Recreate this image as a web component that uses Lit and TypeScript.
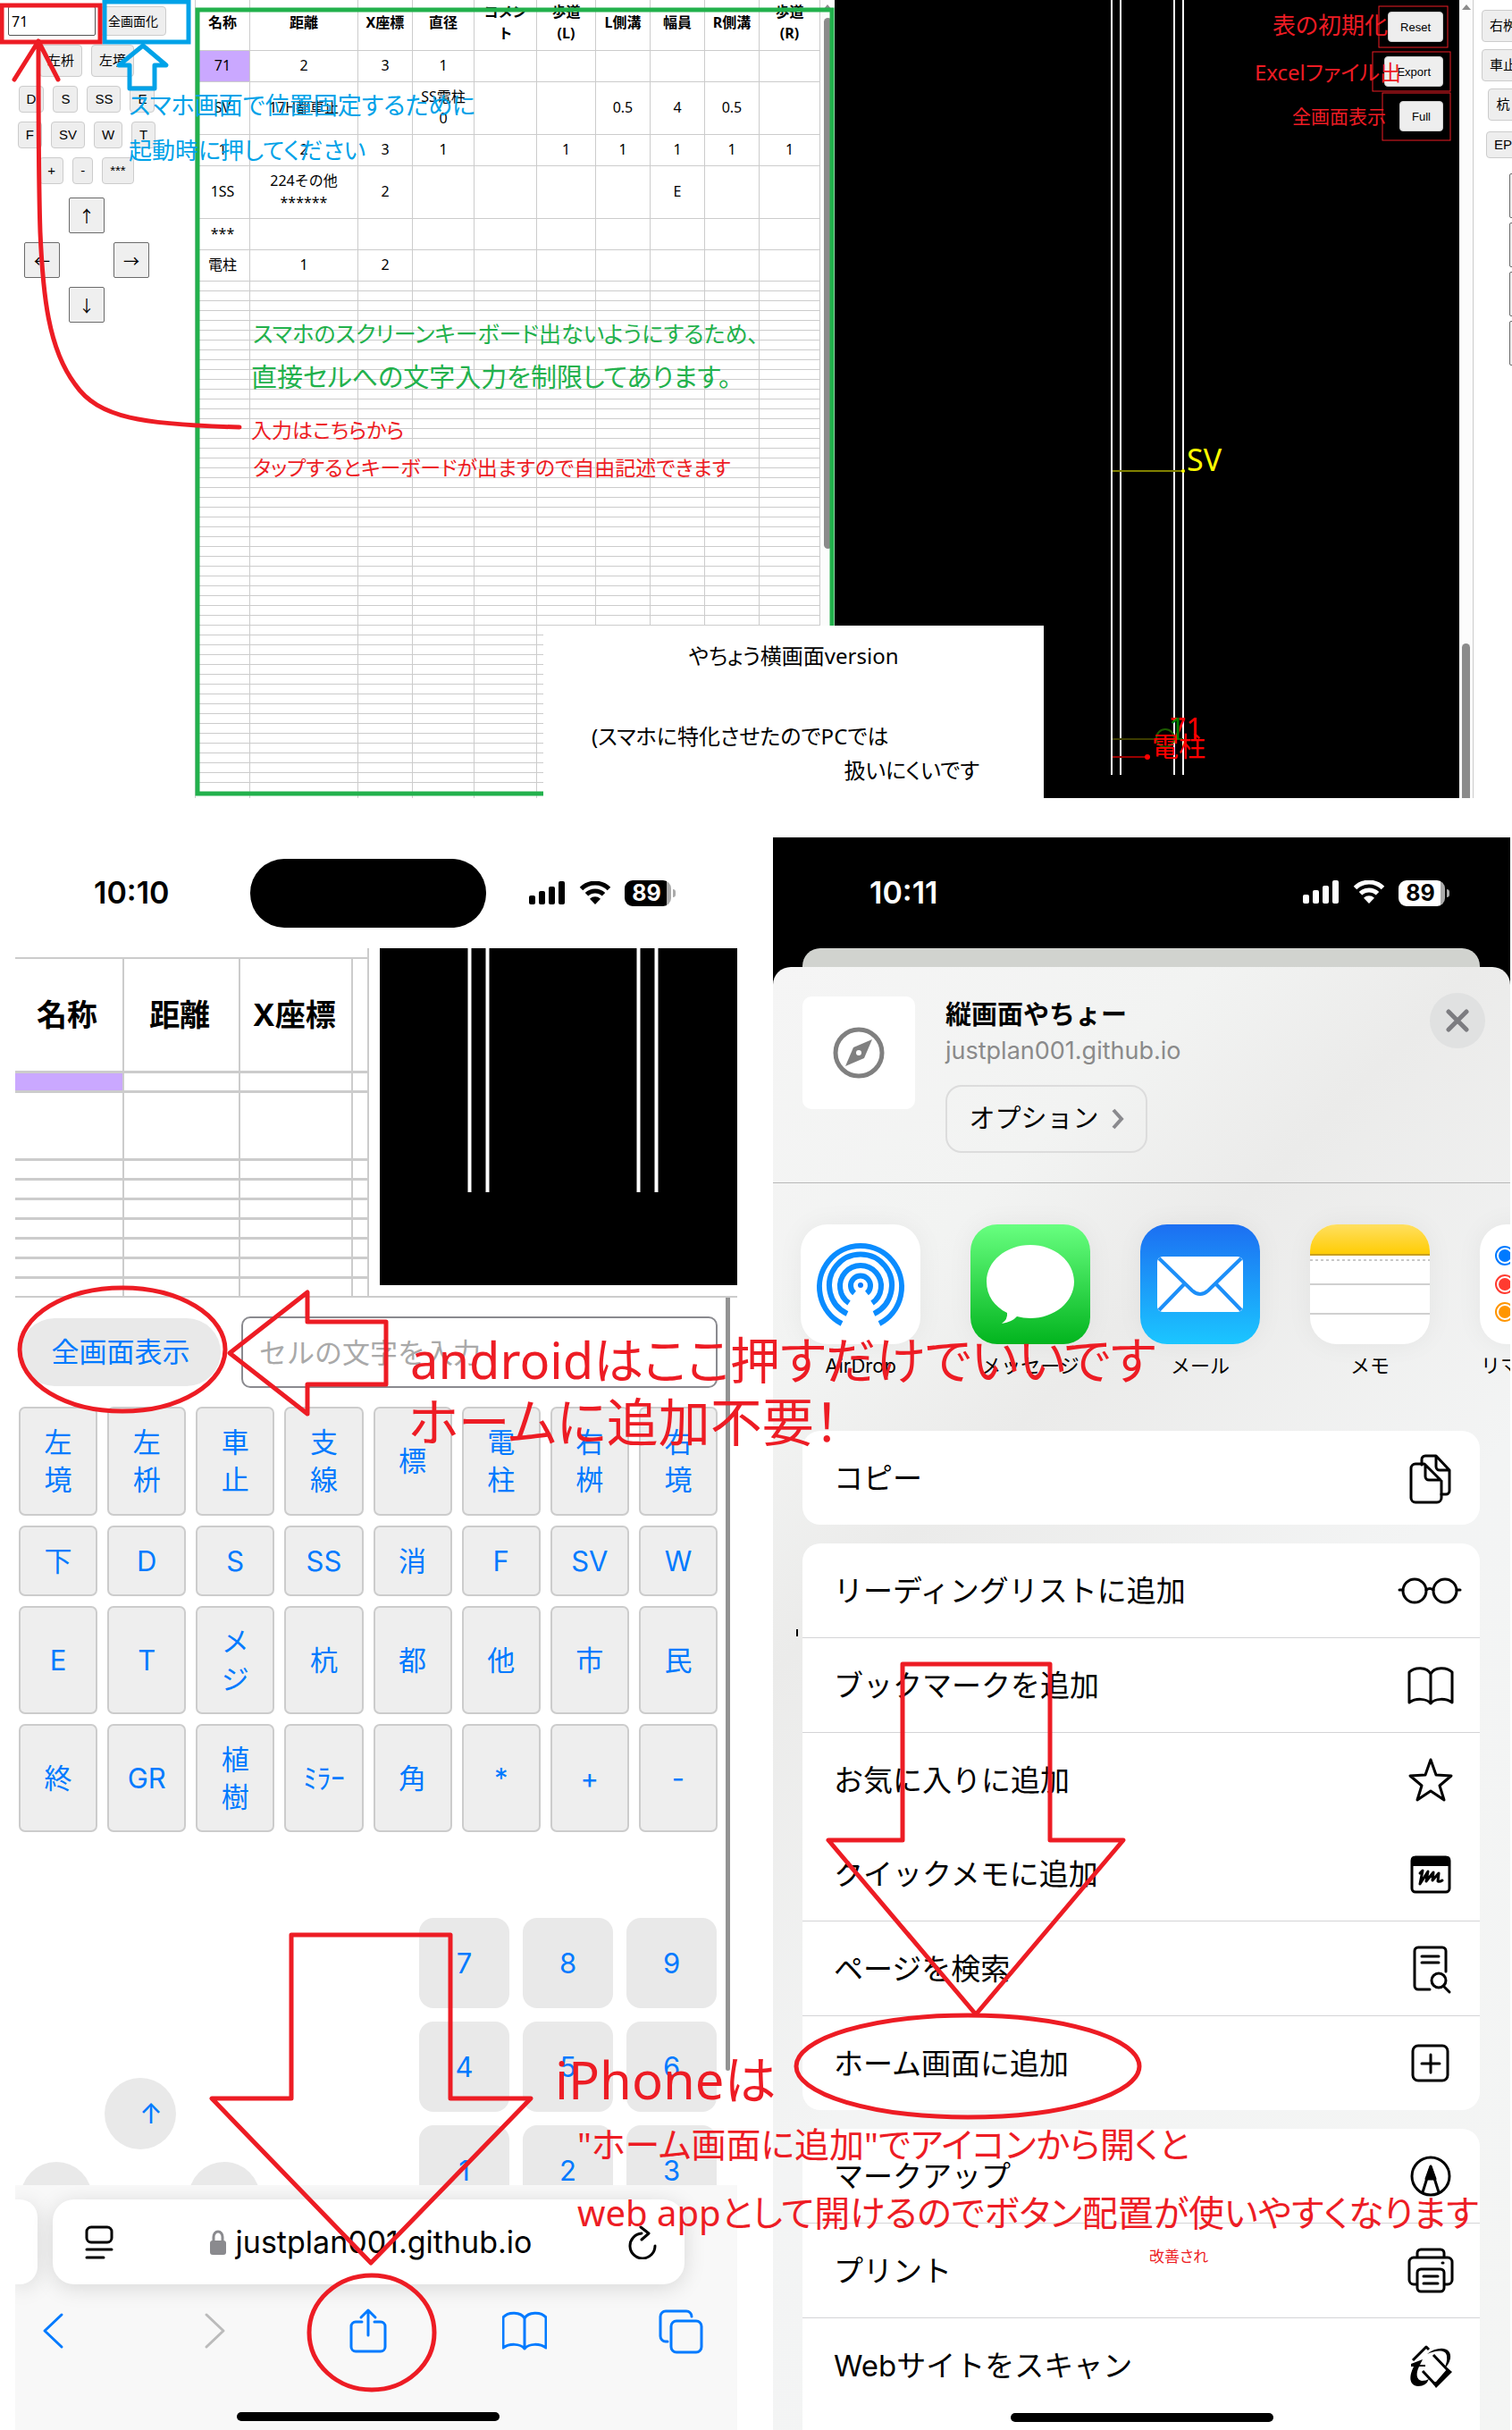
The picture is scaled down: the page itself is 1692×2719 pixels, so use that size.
import { LitElement, html, svg, css, nothing } from "lit";
import { customElement } from "lit/decorators.js";

const SHEET_COLUMNS: [string, number][] = [
  ["名称", 62],
  ["距離", 121],
  ["X座標", 61],
  ["直径", 69],
  ["コメント", 70],
  ["歩道\n(L)", 66],
  ["L側溝", 61],
  ["幅員", 61],
  ["R側溝", 61],
  ["歩道\n(R)", 68],
];

const SHEET_ROWS: { tall: boolean; cells: string[] }[] = [
  { tall: false, cells: ["71", "2", "3", "1", "", "", "", "", "", ""] },
  { tall: true, cells: ["SV", "17H都車止", "", "SS電柱\n0", "", "", "0.5", "4", "0.5", ""] },
  { tall: false, cells: ["1", "2", "3", "1", "", "1", "1", "1", "1", "1"] },
  { tall: true, cells: ["1SS", "224その他\n******", "2", "", "", "", "", "E", "", ""] },
  { tall: false, cells: ["***", "", "", "", "", "", "", "", "", ""] },
  { tall: false, cells: ["電柱", "1", "2", "", "", "", "", "", "", ""] },
];

const EMPTY_ROWS = 53;

const PHONE_KEYS = [
  "左\n境", "左\n枡", "車\n止", "支\n線", "標", "電\n柱", "右\n桝", "右\n境",
  "下", "D", "S", "SS", "消", "F", "SV", "W",
  "E", "T", "メ\nジ", "杭", "都", "他", "市", "民",
  "終", "GR", "植\n樹", "ﾐﾗｰ", "角", "*", "+", "-",
];

/* Status bar glyphs shared by both phones */
const statusIcons = () => html`
  <svg class="signal" viewBox="0 0 40 26" aria-hidden="true">
    <rect x="0" y="16" width="7" height="10" rx="2"></rect>
    <rect x="11" y="11" width="7" height="15" rx="2"></rect>
    <rect x="22" y="6" width="7" height="20" rx="2"></rect>
    <rect x="33" y="0" width="7" height="26" rx="2"></rect>
  </svg>
  <svg class="wifi" viewBox="0 0 36 26" aria-hidden="true">
    <g class="wifi-arcs">
      <path d="M2.5 8.5a22 22 0 0 1 31 0"></path>
      <path d="M8.5 14.8a13.5 13.5 0 0 1 19 0"></path>
    </g>
    <path d="M18 26l-6-6.3a8.6 8.6 0 0 1 12 0z"></path>
  </svg>
  <span class="battery"><span class="level">89</span></span>
`;

@customElement("survey-sheet")
class SurveySheet extends LitElement {
  static styles = css`
    :host {
      display: flex;
      min-width: 0;
      overflow: hidden;
      height: 893px;
    }
    .sheet {
      flex: 1;
      min-width: 0;
      height: max-content;
      table-layout: fixed;
      border-collapse: separate;
      border-spacing: 0;
      font: 16px/24px "Noto Sans", "Noto Sans CJK JP", sans-serif;
      color: #000;
    }
    .cell {
      box-sizing: border-box;
      height: 35px;
      padding: 0 6px 3px;
      border-right: 1px solid #ccc;
      border-bottom: 1px solid #ccc;
      text-align: center;
      vertical-align: middle;
      white-space: pre-line;
      line-height: 24px;
    }
    .cell:first-child {
      border-left: 1px solid #ccc;
      padding-left: 0;
      padding-right: 0;
    }
    .head .cell {
      height: 57px;
      font-weight: 700;
      padding-bottom: 6px;
    }
    .tall .cell {
      height: 59px;
    }
    .thin .cell {
      height: 11px;
      padding: 0;
      font-size: 0;
      line-height: 0;
    }
    .selected {
      background: #caa8ff;
    }
    .track {
      flex: 0 0 16px;
      background: #fcfcfc;
      display: flex;
      flex-direction: column;
      align-items: center;
      padding-top: 5px;
      box-sizing: border-box;
    }
    .up {
      border: 5px solid transparent;
      border-top: 0;
      border-bottom: 6px solid #8b8b8b;
    }
    .thumb {
      width: 9px;
      height: 594px;
      margin-top: 9px;
      border-radius: 5px;
      background: #8b8b8b;
    }
  `;

  render() {
    const total = SHEET_COLUMNS.reduce((sum, [, w]) => sum + w, 0);
    return html`
      <table class="sheet">
        <colgroup>
          ${SHEET_COLUMNS.map(([, w]) => html`<col style="width:${(w / total) * 100}%" />`)}
        </colgroup>
        <thead>
          <tr class="head">
            ${SHEET_COLUMNS.map(([name]) => html`<th class="cell" scope="col">${name}</th>`)}
          </tr>
        </thead>
        <tbody>
          ${SHEET_ROWS.map(
            (row, r) => html`<tr class=${row.tall ? "tall" : "short"}>
              ${row.cells.map(
                (text, c) => html`<td class="cell ${r === 0 && c === 0 ? "selected" : ""}">${text}</td>`
              )}
            </tr>`
          )}
          ${Array.from(
            { length: EMPTY_ROWS },
            () => html`<tr class="thin">
              ${SHEET_COLUMNS.map(() => html`<td class="cell"></td>`)}
            </tr>`
          )}
        </tbody>
      </table>
      <div class="track"><span class="up"></span><span class="thumb"></span></div>
    `;
  }
}

@customElement("landscape-app")
class LandscapeApp extends LitElement {
  static styles = css`
    :host {
      display: grid;
      grid-template-columns: 218px minmax(0, 716fr) minmax(0, 699fr) 16px 43px;
      height: 893px;
      overflow: hidden;
      position: relative;
      font: 15px/28px "Liberation Sans", "Noto Sans CJK JP", sans-serif;
    }
    .pad {
      padding: 7px 24px 0 9px;
      display: flex;
      flex-direction: column;
      gap: 10px;
    }
    .row {
      display: flex;
      justify-content: center;
      gap: 10px;
      padding-right: 9px;
    }
    .entry {
      gap: 5px;
      justify-content: flex-start;
      padding: 0;
    }
    .field {
      box-sizing: border-box;
      width: 98px;
      height: 33px;
      padding: 0 3px;
      border: 1px solid #555;
      border-radius: 2px;
      font: 16px "Noto Sans", sans-serif;
    }
    .key {
      box-sizing: border-box;
      flex: none;
      height: 30px;
      padding: 0 8px;
      border: 1px solid #ccc;
      border-radius: 4px;
      background: #eee;
      color: #000;
      font: inherit;
      line-height: 26px;
      white-space: nowrap;
    }
    .wide {
      height: 36px;
      line-height: 32px;
    }
    .full {
      height: 33px;
      font-size: 14px;
      line-height: 30px;
    }
    .arrows {
      display: grid;
      grid-template-columns: repeat(3, 40px);
      grid-auto-rows: 40px;
      gap: 10px;
      margin: 5px 0 0 18px;
    }
    .arrow {
      box-sizing: border-box;
      padding: 0;
      border: 1px solid #6b6b6b;
      border-radius: 2px;
      background: #efefef;
      color: #000;
      font: 18px "Noto Sans CJK JP", sans-serif;
    }
    .n {
      grid-area: 1 / 2;
    }
    .w {
      grid-area: 2 / 1;
    }
    .e {
      grid-area: 2 / 3;
    }
    .s {
      grid-area: 3 / 2;
    }
    .canvas {
      background: #000;
      display: grid;
    }
    .drawing,
    .actions {
      grid-area: 1 / 1;
    }
    .drawing {
      width: 100%;
      height: 893px;
      font: 32px "Noto Sans", "Noto Sans CJK JP", sans-serif;
    }
    .actions {
      display: flex;
      flex-direction: column;
      align-items: flex-end;
      gap: 16px;
      padding: 13px 18px 0 0;
    }
    .action {
      height: 34px;
      padding: 0 13px;
      border: 1px solid #ccc;
      border-radius: 4px;
      background: #eee;
      font: 13px "Liberation Sans", sans-serif;
      color: #000;
    }
    .track {
      background: #fcfcfc;
      border-right: 1px solid #ccc;
      box-sizing: border-box;
      display: flex;
      flex-direction: column;
      align-items: center;
      justify-content: space-between;
      padding-top: 5px;
    }
    .up {
      border: 5px solid transparent;
      border-top: 0;
      border-bottom: 6px solid #8b8b8b;
    }
    .thumb {
      width: 9px;
      height: 173px;
      border-radius: 5px 5px 0 0;
      background: #8b8b8b;
    }
    .side {
      overflow: hidden;
    }
    .side-keys {
      width: 66px;
      display: flex;
      flex-direction: column;
      align-items: center;
      gap: 8px;
      padding-top: 11px;
    }
    .side-arrows {
      display: grid;
      grid-template-columns: 40px;
      grid-auto-rows: 50px;
      gap: 5px;
      margin: 17px 0 0 40px;
    }
    .ep {
      margin-top: 4px;
    }
    .notice {
      position: absolute;
      left: 608px;
      bottom: 0;
      box-sizing: border-box;
      width: 560px;
      height: 193px;
      padding: 16px 54px 0;
      background: #fff;
      font: 24px/36px "Noto Sans", "Noto Sans CJK JP", sans-serif;
      font-feature-settings: "palt";
    }
    .line {
      margin: 0;
      white-space: nowrap;
    }
    .title {
      text-align: center;
    }
    .note {
      margin-top: 54px;
    }
    .end {
      margin-top: 2px;
      padding-right: 18px;
      text-align: right;
    }
  `;

  private keys(labels: string[], extra = "") {
    return html`<div class="row">
      ${labels.map((label) => html`<button class="key ${extra}">${label}</button>`)}
    </div>`;
  }

  render() {
    return html`
      <div class="pad">
        <div class="row entry">
          <input class="field" aria-label="セルの文字" .value=${"71"} />
          <button class="key full">全画面化</button>
        </div>
        ${this.keys(["左枡", "左境"], "wide")} ${this.keys(["D", "S", "SS", "E"])}
        ${this.keys(["F", "SV", "W", "T"])} ${this.keys(["+", "-", "***"])}
        <div class="arrows">
          <button class="arrow n">↑</button>
          <button class="arrow w">←</button>
          <button class="arrow e">→</button>
          <button class="arrow s">↓</button>
        </div>
      </div>
      <survey-sheet></survey-sheet>
      <div class="canvas">
        <svg class="drawing" viewBox="0 0 699 893" preserveAspectRatio="xMidYMin slice">
          <g stroke="#fff" stroke-width="2">
            <path d="M310 0V867M320 0V867M380 0V867M390 0V867"></path>
          </g>
          <path d="M311 527H390" stroke="#808000" stroke-width="2"></path>
          <circle cx="390" cy="527" r="2" fill="#ff0"></circle>
          <text x="394" y="527" fill="#ff0" font-size="34">SV</text>
          <path d="M311 827H360" stroke="#3c3c00" stroke-width="2"></path>
          <circle cx="370" cy="826" r="10" fill="none" stroke="#1c5a00" stroke-width="2"></circle>
          <path d="M370 827H390" stroke="#0a6a00" stroke-width="2"></path>
          <text x="375" y="827" fill="#f00">71</text>
          <text x="374" y="827" fill="#008000">1</text>
          <path d="M311 847H350" stroke="#900" stroke-width="2"></path>
          <circle cx="350" cy="847" r="3" fill="#f00"></circle>
          <text x="355" y="846" fill="#f00" font-size="30">電柱</text>
        </svg>
        <div class="actions">
          <button class="action">Reset</button>
          <button class="action">Export</button>
          <button class="action">Full</button>
        </div>
      </div>
      <div class="track"><span class="up"></span><span class="thumb"></span></div>
      <div class="side">
        <div class="side-keys">
          <button class="key wide">右桝</button>
          <button class="key wide">車止</button>
          <button class="key wide">杭</button>
          <button class="key ep">EP</button>
        </div>
        <div class="side-arrows">
          <button class="arrow">↑</button>
          <button class="arrow">←</button>
          <button class="arrow">→</button>
          <button class="arrow">↓</button>
        </div>
      </div>
      <div class="notice">
        <p class="line title">やちょう横画面version</p>
        <p class="line note">(スマホに特化させたのでPCでは</p>
        <p class="line end">扱いにくいです</p>
      </div>
    `;
  }
}

const phoneStyles = css`
  .status {
    display: flex;
    align-items: center;
    height: 124px;
    box-sizing: border-box;
    font: 600 34px/40px Inter, sans-serif;
  }
  .signal {
    width: 40px;
    height: 26px;
    fill: currentColor;
  }
  .wifi {
    width: 36px;
    height: 26px;
    margin-left: 16px;
    fill: currentColor;
  }
  .wifi-arcs {
    fill: none;
    stroke: currentColor;
    stroke-width: 5;
  }
  .battery {
    display: flex;
    align-items: center;
    margin-left: 15px;
  }
  .battery::after {
    content: "";
    width: 3px;
    height: 9px;
    margin-left: 2px;
    border-radius: 0 3px 3px 0;
    background: #aaa;
  }
  .level {
    box-sizing: border-box;
    width: 52px;
    height: 29px;
    border-radius: 9px;
    padding-right: 3px;
    background: linear-gradient(90deg, currentColor 47px, #aaa 47px);
    font: 700 25px/29px Inter, sans-serif;
    text-align: center;
  }
  .level::first-line {
    color: var(--level-text);
  }
  .home {
    width: 294px;
    height: 10px;
    border-radius: 5px;
    background: #000;
  }
`;

@customElement("input-phone")
class InputPhone extends LitElement {
  static styles = [
    phoneStyles,
    css`
      :host {
        display: flex;
        flex-direction: column;
        min-width: 0;
        overflow: hidden;
        background: #fff;
        color: #000;
        font: 31px/42px Inter, "Noto Sans CJK JP", sans-serif;
        --level-text: #fff;
      }
      .status {
        padding: 0 69px 0 88px;
      }
      .time {
        width: 175px;
      }
      .island {
        width: 264px;
        height: 77px;
        border-radius: 38px;
        background: #000;
        margin-right: auto;
      }
      .split {
        display: flex;
        gap: 12px;
        height: 389px;
        border-bottom: 2px solid #ccc;
      }
      .grid {
        flex: 395;
        min-width: 0;
        width: 0;
        height: 389px;
        table-layout: fixed;
        border-collapse: separate;
        border-spacing: 0;
        border-right: 2px solid #ccc;
      }
      .c1 {
        width: 31%;
      }
      .c2 {
        width: 33%;
      }
      .c3 {
        width: 32%;
      }
      .cell {
        box-sizing: border-box;
        padding: 0;
        height: 22px;
        font-size: 0;
        line-height: 0;
        border-right: 2px solid #ccc;
        border-bottom: 3px solid #ccc;
      }
      .cell:last-child {
        border-right: 0;
      }
      .top .cell {
        height: 12px;
        border-right: 0;
        border-bottom-width: 2px;
      }
      .head .cell {
        height: 128px;
        padding-right: 4px;
        font: 700 34px/48px Inter, "Noto Sans CJK JP", sans-serif;
        white-space: nowrap;
      }
      .tall .cell {
        height: 75px;
      }
      .last .cell {
        height: 19px;
        border-bottom: 0;
      }
      .selected {
        background: #caa8ff;
      }
      .view {
        flex: 401;
        min-width: 0;
        height: 377px;
        background: #000;
      }
      .body {
        position: relative;
        display: flex;
        flex-direction: column;
        flex: none;
        height: 993px;
        overflow: hidden;
      }
      .indicator {
        position: absolute;
        top: 0;
        right: 8px;
        width: 5px;
        height: 865px;
        border-radius: 0 0 3px 3px;
        background: #939393;
      }
      .entry {
        display: flex;
        gap: 23px;
        padding: 21px 22px 0 6px;
      }
      .show {
        width: 224px;
        height: 76px;
        border: 0;
        margin-top: 2px;
        border-radius: 38px;
        background: #e9e9e9;
        color: #007aff;
        font: inherit;
      }
      .field {
        flex: 1;
        min-width: 0;
        box-sizing: border-box;
        height: 80px;
        padding: 0 18px;
        border: 2px solid #8a8a8f;
        border-radius: 10px;
        font: inherit;
      }
      .field::placeholder {
        color: #a9a9a9;
      }
      .keys {
        display: grid;
        grid-template-columns: repeat(8, minmax(0, 1fr));
        grid-template-rows: 122px 79px 121px 121px;
        gap: 11px;
        padding: 21px 22px 0 4px;
      }
      .key {
        padding: 0;
        border: 2px solid #ccc;
        border-radius: 7px;
        background: #eee;
        color: #007aff;
        font: inherit;
        white-space: pre-line;
      }
      .bottom {
        display: flex;
        justify-content: space-between;
        align-items: flex-start;
        padding: 96px 23px 0 6px;
      }
      .dpad {
        display: grid;
        grid-template-columns: repeat(3, 80px);
        grid-auto-rows: 80px;
        gap: 14px;
        padding-top: 179px;
      }
      .round {
        border: 0;
        padding: 0 0 0 24px;
        border-radius: 40px;
        background: #e9e9e9;
        color: #007aff;
        font: inherit;
      }
      .n {
        grid-area: 1 / 2;
      }
      .w {
        grid-area: 2 / 1;
      }
      .e {
        grid-area: 2 / 3;
      }
      .numbers {
        display: grid;
        grid-template-columns: repeat(3, 101px);
        grid-auto-rows: 101px;
        gap: 15px;
      }
      .number {
        border: 0;
        padding: 0;
        border-radius: 16px;
        background: #e9e9e9;
        color: #007aff;
        font: inherit;
      }
      .browser {
        flex: none;
        height: 275px;
        background: #f8f8f8;
        overflow: hidden;
        display: flex;
        flex-direction: column;
        align-items: center;
      }
      .bar {
        align-self: stretch;
        display: flex;
        gap: 17px;
        padding: 16px 59px 0 0;
      }
      .peek {
        width: 25px;
        border-radius: 0 20px 20px 0;
        background: #fff;
        box-shadow: 0 4px 24px #0002;
      }
      .address {
        flex: 1;
        display: flex;
        align-items: center;
        height: 95px;
        padding: 0 31px 0 36px;
        box-sizing: border-box;
        border-radius: 24px;
        background: #fff;
        box-shadow: 0 4px 24px #0002;
        font-size: 34px;
      }
      .icon {
        fill: none;
        stroke: #000;
        stroke-width: 3;
        stroke-linecap: round;
        stroke-linejoin: round;
        display: block;
      }
      .pageicon {
        width: 32px;
        height: 38px;
      }
      .lock {
        width: 18px;
        height: 28px;
        margin: 0 11px 0 auto;
      }
      .reload {
        width: 32px;
        height: 38px;
        margin-left: auto;
      }
      .tools {
        align-self: stretch;
        display: flex;
        justify-content: space-between;
        padding: 25px 38px 0 18px;
      }
      .tool {
        border: 0;
        padding: 0;
        background: none;
      }
      .tool .icon {
        width: 50px;
        height: 54px;
        stroke: #007aff;
      }
      .tool .dim {
        stroke: #bbb;
      }
      .home {
        margin: 64px 18px 0 0;
      }
    `,
  ];

  private cells(count = 4, selected = false) {
    return Array.from(
      { length: count },
      (_, i) => html`<td class="cell ${selected && i === 0 ? "selected" : ""}"></td>`
    );
  }

  render() {
    return html`
      <div class="status">
        <span class="time">10:10</span>
        <span class="island"></span>
        ${statusIcons()}
      </div>
      <div class="split">
        <table class="grid">
          <colgroup>
            <col class="c1" /><col class="c2" /><col class="c3" /><col />
          </colgroup>
          <tbody>
            <tr class="top">${this.cells()}</tr>
            <tr class="head">
              <th class="cell" scope="col">名称</th>
              <th class="cell" scope="col">距離</th>
              <th class="cell" scope="col">X座標</th>
              <td class="cell"></td>
            </tr>
            <tr>${this.cells(4, true)}</tr>
            <tr class="tall">${this.cells()}</tr>
            ${Array.from({ length: 6 }, () => html`<tr>${this.cells()}</tr>`)}
            <tr class="last">${this.cells()}</tr>
          </tbody>
        </table>
        <svg class="view" viewBox="0 0 401 377" preserveAspectRatio="xMidYMin slice">
          <path d="M101 0V273M121 0V273M290 0V273M310 0V273" stroke="#fff" stroke-width="4"></path>
        </svg>
      </div>
      <div class="body">
        <span class="indicator"></span>
        <div class="entry">
          <button class="show">全画面表示</button>
          <input class="field" aria-label="セルの文字" placeholder="セルの文字を入力" />
        </div>
        <div class="keys">
          ${PHONE_KEYS.map((label) => html`<button class="key">${label}</button>`)}
        </div>
        <div class="bottom">
          <div class="dpad">
            <button class="round n">↑</button>
            <button class="round w" aria-label="左"></button>
            <button class="round e" aria-label="右"></button>
          </div>
          <div class="numbers">
            ${[7, 8, 9, 4, 5, 6, 1, 2, 3].map((n) => html`<button class="number">${n}</button>`)}
          </div>
        </div>
      </div>
      <div class="browser">
        <div class="bar">
          <span class="peek"></span>
          <div class="address">
            <svg class="icon pageicon" viewBox="0 0 32 38">
              <rect x="2" y="2" width="28" height="17" rx="5"></rect>
              <path d="M2 27H30M2 36H21"></path>
            </svg>
            <svg class="lock" viewBox="0 0 18 28">
              <path d="M4 13V8a5 6 0 0 1 10 0v5" fill="none" stroke="#8a8a8e" stroke-width="3"></path>
              <rect x="0" y="12" width="18" height="16" rx="3" fill="#8a8a8e"></rect>
            </svg>
            <span>justplan001.github.io</span>
            <svg class="icon reload" viewBox="0 0 32 38">
              <path d="M15 9A14 14 0 1 0 30 23M14 2l9 7-8 7"></path>
            </svg>
          </div>
        </div>
        <div class="tools">
          <button class="tool" aria-label="戻る">
            <svg class="icon" viewBox="0 0 50 54"><path d="M34 9L15 27L34 45"></path></svg>
          </button>
          <button class="tool" aria-label="進む">
            <svg class="icon dim" viewBox="0 0 50 54"><path d="M20 9L39 27L20 45"></path></svg>
          </button>
          <button class="tool" aria-label="共有">
            <svg class="icon" viewBox="0 0 50 54">
              <path d="M19 17H12a5 5 0 0 0-5 5V45a5 5 0 0 0 5 5H40a5 5 0 0 0 5-5V22a5 5 0 0 0-5-5H33M26 32V4M18 12l8-8 8 8"></path>
            </svg>
          </button>
          <button class="tool" aria-label="ブックマーク">
            <svg class="icon" viewBox="0 0 50 54">
              <path d="M25 13C21 6 7 5 1 12V46C8 41 20 41 25 47C30 41 42 41 49 46V12C43 5 29 6 25 13V47"></path>
            </svg>
          </button>
          <button class="tool" aria-label="タブ">
            <svg class="icon" viewBox="0 0 50 54">
              <rect x="14" y="16" width="34" height="35" rx="6"></rect>
              <path d="M10 39H8a6 6 0 0 1-6-6V11a6 6 0 0 1 6-6H31a6 6 0 0 1 6 6"></path>
            </svg>
          </button>
        </div>
        <span class="home"></span>
      </div>
    `;
  }
}

const ICONS: Record<string, unknown> = {
  copy: svg`<path d="M15 13V7a4 4 0 0 1 4-4H31L46 19V42a4 4 0 0 1-4 4H37M31 3V15a4 4 0 0 0 4 4H46"></path>
    <path d="M7 13H17L36 32V51a5 5 0 0 1-5 5H7a5 5 0 0 1-5-5V18a5 5 0 0 1 5-5zM18 14V27a4 4 0 0 0 4 4H35" transform="translate(1 -1)"></path>`,
  glasses: svg`<circle cx="7" cy="28" r="13"></circle><circle cx="41" cy="28" r="13"></circle>
    <path d="M20 27q4-3 8 0M-6 27h-4M54 27h4"></path>`,
  book: svg`<path d="M25 15C21 7 7 7 1 13V47C8 42 20 42 25 48C30 42 42 42 49 47V13C43 7 29 7 25 15V48"></path>`,
  star: svg`<path d="M25 5L31 22L48 23L35 34L40 50L25 40L10 50L15 34L2 23L19 22z"></path>`,
  memo: svg`<rect x="4" y="9" width="42" height="39" rx="4"></rect>
    <path d="M4 18V12a3 3 0 0 1 3-3H43a3 3 0 0 1 3 3V18z" fill="#000" stroke-width="2"></path>
    <path d="M13 27l3-3-3 15 9-14-2 11 8-10-1 9 7-8-1 9q2 1 5-1"></path>`,
  find: svg`<path d="M24 51H11a4 4 0 0 1-4-4V8a4 4 0 0 1 4-4H38a4 4 0 0 1 4 4V31M15 14H34M15 21H34"></path>
    <circle cx="34" cy="41" r="8"></circle><path d="M39 47L46 54"></path>`,
  plus: svg`<rect x="5" y="8" width="39" height="39" rx="6"></rect><path d="M25 18V38M15 28H35"></path>`,
  markup: svg`<circle cx="25" cy="28" r="21"></circle><path d="M16 46L21 30L25 18L29 30L34 46"></path>
    <path d="M20 31L25 17L30 31z" fill="#000"></path>`,
  print: svg`<path d="M10 12V8a4 4 0 0 1 4-4H36a4 4 0 0 1 4 4v4M9 43H6a5 5 0 0 1-5-5V18a5 5 0 0 1 5-5H44a5 5 0 0 1 5 5V38a5 5 0 0 1-5 5H41"></path>
    <rect x="10" y="26" width="30" height="25" rx="4"></rect><path d="M17 34H33M17 42H33M38 19h1"></path>`,
  scan: svg`<path d="M5 22L20 7L23 10M28 16L46 35M16 34L30 49" stroke-linecap="butt"></path>
    <g fill="#000" stroke="none">
      <path d="M21 15C32 6 49 6 47 20Q45 28 40 31Q44 24 43 17C42 10 32 10 21 15z"></path>
      <path d="M44 31L49 35L31 53L26 46L31 46z"></path>
      <path d="M3 26L16 21L13 27H19V29H12C8 37 9 44 15 45Q20 45 23 43Q20 51 11 51C0 50 1 39 6 29H3z"></path>
    </g>`,
};

const ACTION_GROUPS: { label: string; icon: string; rule: boolean }[][] = [
  [{ label: "コピー", icon: "copy", rule: false }],
  [
    { label: "リーディングリストに追加", icon: "glasses", rule: true },
    { label: "ブックマークを追加", icon: "book", rule: true },
    { label: "お気に入りに追加", icon: "star", rule: false },
    { label: "クイックメモに追加", icon: "memo", rule: true },
    { label: "ページを検索", icon: "find", rule: true },
    { label: "ホーム画面に追加", icon: "plus", rule: false },
  ],
  [
    { label: "マークアップ", icon: "markup", rule: true },
    { label: "プリント", icon: "print", rule: true },
    { label: "Webサイトをスキャン", icon: "scan", rule: false },
  ],
];

const APPS: { label: string; tone: string; art: unknown }[] = [
  {
    label: "AirDrop",
    tone: "white",
    art: svg`<g fill="none" stroke="#0a8cff" stroke-width="6">
        <path d="M46 111A46 46 0 1 1 88 111"></path>
        <path d="M52 99A35 35 0 1 1 82 99" transform="translate(0 1)"></path>
        <path d="M54 88A23 23 0 1 1 80 88"></path>
        <path d="M60 77A11 11 0 1 1 74 77"></path>
      </g><circle cx="67" cy="68" r="3" fill="#0a7aff"></circle>`,
  },
  {
    label: "メッセージ",
    tone: "green",
    art: svg`<path d="M67 23C40 23 18 41 18 64C18 80 27 92 41 99Q42 106 35 111Q47 109 52 103Q59 105 67 105C94 105 116 87 116 64S94 23 67 23z" fill="#fff"></path>`,
  },
  {
    label: "メール",
    tone: "blue",
    art: svg`<rect x="19" y="36" width="96" height="62" rx="6" fill="#fff"></rect>
      <path d="M21 38L58 74Q67 82 76 74L113 38M21 96L49 67M113 96L85 67" fill="none" stroke="#1d8ff8" stroke-width="4"></path>`,
  },
  {
    label: "メモ",
    tone: "white",
    art: svg`<rect width="134" height="34" fill="url(#gold)"></rect>
      <path d="M0 34H134" stroke="#c8a020" stroke-width="2"></path>
      <path d="M0 40H134" stroke="#c8c8c8" stroke-width="2" stroke-dasharray="3 3"></path>
      <path d="M0 67H134M0 100H134" stroke="#d0d0d0" stroke-width="2"></path>`,
  },
  {
    label: "リマインダー",
    tone: "white",
    art: svg`<g stroke-width="2">
        <circle cx="28" cy="35" r="7" fill="#007aff"></circle><circle cx="28" cy="35" r="10" fill="none" stroke="#007aff"></circle>
        <circle cx="28" cy="67" r="7" fill="#ff3b30"></circle><circle cx="28" cy="67" r="10" fill="none" stroke="#ff3b30"></circle>
        <circle cx="28" cy="98" r="7" fill="#ff9500"></circle><circle cx="28" cy="98" r="10" fill="none" stroke="#ff9500"></circle>
      </g>`,
  },
];

@customElement("share-phone")
class SharePhone extends LitElement {
  static styles = [
    phoneStyles,
    css`
      :host {
        display: flex;
        flex-direction: column;
        position: relative;
        min-width: 0;
        overflow: hidden;
        background: #000;
        font: 33px/48px Inter, "Noto Sans CJK JP", sans-serif;
        color: #000;
        --level-text: #000;
      }
      .status {
        justify-content: space-between;
        padding: 0 68px 0 108px;
        color: #fff;
      }
      .icons {
        display: flex;
      }
      .behind {
        height: 21px;
        margin: 0 34px 0 33px;
        border-radius: 20px 20px 0 0;
        background: #d1d3cf;
      }
      .sheet {
        flex: 1;
        border-radius: 20px 20px 0 0;
        background: linear-gradient(135deg, #f5f5f5, #f2f3f2 20%, #ebebea 32%, #f3f4f4 55%, #f4f5f4);
      }
      .head {
        display: flex;
        height: 242px;
        box-sizing: border-box;
        padding: 29px 28px 0 33px;
        border-bottom: 1px solid #b8b8b8;
      }
      .thumb {
        display: grid;
        place-items: center;
        width: 126px;
        height: 126px;
        margin-top: 4px;
        border-radius: 10px;
        background: #fff;
      }
      .compass {
        width: 60px;
        height: 60px;
      }
      .about {
        flex: 1;
        padding-left: 34px;
      }
      .name {
        margin: 3px 0 0;
        font-size: 29px;
        font-weight: 600;
        line-height: 44px;
      }
      .url {
        margin: 0;
        color: #8a8a8a;
        font-size: 27px;
        line-height: 36px;
      }
      .option {
        display: flex;
        align-items: center;
        justify-content: center;
        gap: 14px;
        box-sizing: border-box;
        width: 226px;
        height: 76px;
        margin-top: 20px;
        padding: 0;
        border: 2px solid #dcdcdc;
        border-radius: 18px;
        background: none;
        font: inherit;
        font-size: 29px;
        color: #000;
      }
      .chevron {
        width: 14px;
        height: 24px;
        fill: none;
        stroke: #8a8a8e;
        stroke-width: 4;
      }
      .close {
        display: grid;
        place-items: center;
        width: 62px;
        height: 62px;
        padding: 0;
        border: 0;
        border-radius: 31px;
        background: #e0e1e1;
      }
      .cross {
        width: 26px;
        height: 26px;
        stroke: #7c7c80;
        stroke-width: 5;
        stroke-linecap: round;
      }
      .apps {
        display: flex;
        gap: 56px;
        box-sizing: border-box;
        height: 277px;
        padding: 46px 0 0 31px;
        overflow: hidden;
      }
      .app {
        flex: none;
        display: flex;
        flex-direction: column;
        align-items: center;
        gap: 8px;
        width: 134px;
        padding: 0;
        border: 0;
        background: none;
        color: #000;
        font: inherit;
        font-size: 22px;
        line-height: 32px;
        white-space: nowrap;
      }
      .tile {
        width: 134px;
        height: 134px;
        border-radius: 30px;
        box-shadow: 0 0 30px #0000000d;
      }
      .white {
        background: #fff;
      }
      .green {
        background: linear-gradient(#68ff80, #02b41e);
      }
      .blue {
        background: linear-gradient(#1c6ff2, #1bc6ff);
      }
      .group {
        margin: 0 34px 21px 33px;
        border-radius: 20px;
        background: #fff;
      }
      .group:last-child {
        margin-bottom: 0;
        border-radius: 20px 20px 0 0;
        height: 337px;
      }
      .action {
        display: flex;
        align-items: center;
        justify-content: space-between;
        box-sizing: border-box;
        width: 100%;
        height: 105px;
        padding: 0 30px 0 35px;
        border: 0;
        background: none;
        color: #000;
        font: inherit;
        text-align: left;
      }
      .rule {
        height: 106px;
        border-bottom: 1px solid #d4d4d6;
      }
      .icon {
        width: 50px;
        height: 56px;
        overflow: visible;
        fill: none;
        stroke: #000;
        stroke-width: 3;
        stroke-linecap: round;
        stroke-linejoin: round;
      }
      .home {
        position: absolute;
        left: 50%;
        bottom: 10px;
        margin-left: -147px;
      }
    `,
  ];

  render() {
    return html`
      <div class="status">
        <span>10:11</span>
        <span class="icons">${statusIcons()}</span>
      </div>
      <div class="behind"></div>
      <div class="sheet">
        <div class="head">
          <div class="thumb">
            <svg class="compass" viewBox="0 0 60 60">
              <circle cx="30" cy="30" r="26" fill="none" stroke="#808080" stroke-width="5"></circle>
              <path d="M45 15L36 36L15 45L24 24z" fill="#808080"></path>
              <circle cx="30" cy="30" r="3" fill="#fff"></circle>
            </svg>
          </div>
          <div class="about">
            <p class="name">縦画面やちょー</p>
            <p class="url">justplan001.github.io</p>
            <button class="option">
              オプション
              <svg class="chevron" viewBox="0 0 14 24"><path d="M2 2l9 10-9 10"></path></svg>
            </button>
          </div>
          <button class="close" aria-label="閉じる">
            <svg class="cross" viewBox="0 0 26 26"><path d="M3 3L23 23M23 3L3 23"></path></svg>
          </button>
        </div>
        <div class="apps">
          ${APPS.map(
            (app) => html`<button class="app">
              <svg class="tile ${app.tone}" viewBox="0 0 134 134">
                ${app.label === "メモ"
                  ? svg`<defs><linearGradient id="gold" x1="0" y1="0" x2="0" y2="1">
                      <stop offset="0" stop-color="#ffdf60"></stop><stop offset="1" stop-color="#ffcc02"></stop>
                    </linearGradient></defs>`
                  : nothing}
                ${app.art}
              </svg>
              ${app.label}
            </button>`
          )}
        </div>
        ${ACTION_GROUPS.map(
          (group) => html`<div class="group">
            ${group.map(
              (item) => html`<button class="action ${item.rule ? "rule" : ""}">
                ${item.label}
                <svg class="icon" viewBox="0 0 50 56">${ICONS[item.icon]}</svg>
              </button>`
            )}
          </div>`
        )}
      </div>
      <span class="home"></span>
    `;
  }
}

/* Hand-placed callouts: x, baseline y, size, colour class, text */
const NOTES: [number, number, number, string, string][] = [
  [144, 128, 27, "sky", "スマホ画面で位置固定するために"],
  [144, 178, 26, "sky", "起動時に押してください"],
  [283, 383, 25, "leaf", "スマホのスクリーンキーボード出ないようにするため、"],
  [281, 433, 29, "leaf", "直接セルへの文字入力を制限してあります。"],
  [281, 490, 23, "red", "入力はこちらから"],
  [283, 532, 23, "red", "タップするとキーボードが出ますので自由記述できます"],
  [1424, 38, 26, "red", "表の初期化"],
  [1404, 90, 24, "red", "Excelファイル出"],
  [1446, 138, 21, "red", "全画面表示"],
  [459, 1543, 56, "red", "androidはここ押すだけでいいです"],
  [457, 1613, 58, "red", "ホームに追加不要！"],
  [621, 2349, 58, "red", "iPhoneは"],
  [646, 2414, 39, "red", "\"ホーム画面に追加\"でアイコンから開くと"],
  [646, 2491, 40, "red", "web appとして開けるのでボタン配置が使いやすくなります"],
  [1286, 2531, 17, "red", "改善され"],
];

@customElement("callout-layer")
class CalloutLayer extends LitElement {
  static styles = css`
    :host {
      position: absolute;
      inset: 0;
      pointer-events: none;
    }
    .layer {
      display: block;
      width: 100%;
      font-family: "Noto Sans", "Noto Sans CJK JP", sans-serif;
      font-feature-settings: "palt";
    }
    .stroke {
      fill: none;
      stroke-width: 5;
      stroke-linejoin: round;
      stroke-linecap: round;
    }
    .box {
      fill: none;
      stroke: #ed1c24;
      stroke-width: 1;
    }
    .to-red {
      stroke: #ed1c24;
    }
    .to-sky {
      stroke: #00a2e8;
    }
    .to-leaf {
      stroke: #22b14c;
      stroke-linejoin: miter;
      stroke-linecap: butt;
    }
    .red {
      fill: #ed1c24;
    }
    .sky {
      fill: #00a2e8;
    }
    .leaf {
      fill: #22b14c;
    }
  `;

  render() {
    return html`<svg class="layer" viewBox="0 0 1692 2719">
      <g class="stroke to-leaf">
        <path d="M608 888H221V11H931V700"></path>
      </g>
      <g class="stroke to-sky">
        <rect x="117" y="2" width="94" height="45" stroke-linejoin="miter"></rect>
        <path d="M160 51L186 73H173V99H145V73H133z"></path>
      </g>
      <g class="stroke to-red">
        <rect x="2" y="6" width="110" height="41" stroke-linejoin="miter"></rect>
        <path d="M16 89L43 46L65 89M43 46C43 120 43 200 45 260C48 330 54 390 84 430C110 468 160 475 268 478"></path>
        <ellipse cx="137" cy="1510" rx="115" ry="69"></ellipse>
        <path d="M257 1514L344 1446V1479H432V1549H344V1582z"></path>
        <path d="M326 2165H504V2348H594L415 2532L237 2348H326z"></path>
        <ellipse cx="416" cy="2610" rx="70" ry="64"></ellipse>
        <path d="M1010 1862H1175V2059H1257L1092 2254L927 2059H1010z"></path>
        <ellipse cx="1083" cy="2312" rx="192" ry="57"></ellipse>
      </g>
      <rect class="box" x="1543" y="7" width="77" height="46"></rect>
      <rect class="box" x="1536" y="58" width="87" height="44"></rect>
      <rect class="box" x="1547" y="104" width="76" height="53"></rect>
      <rect x="891" y="1823" width="2" height="8"></rect>
      ${NOTES.map(
        ([x, y, size, tone, text]) => svg`<text class=${tone} x=${x} y=${y} font-size=${size}>${text}</text>`
      )}
    </svg>`;
  }
}

@customElement("app-root")
class AppRoot extends LitElement {
  static styles = css`
    :host {
      display: block;
      position: relative;
      overflow: hidden;
      background: #fff;
    }
    .phones {
      display: grid;
      grid-template-columns: minmax(0, 808fr) minmax(0, 825fr);
      gap: 40px;
      padding: 44px 2px 0 17px;
    }
  `;

  render() {
    return html`
      <landscape-app></landscape-app>
      <div class="phones">
        <input-phone></input-phone>
        <share-phone></share-phone>
      </div>
      <callout-layer></callout-layer>
    `;
  }
}
